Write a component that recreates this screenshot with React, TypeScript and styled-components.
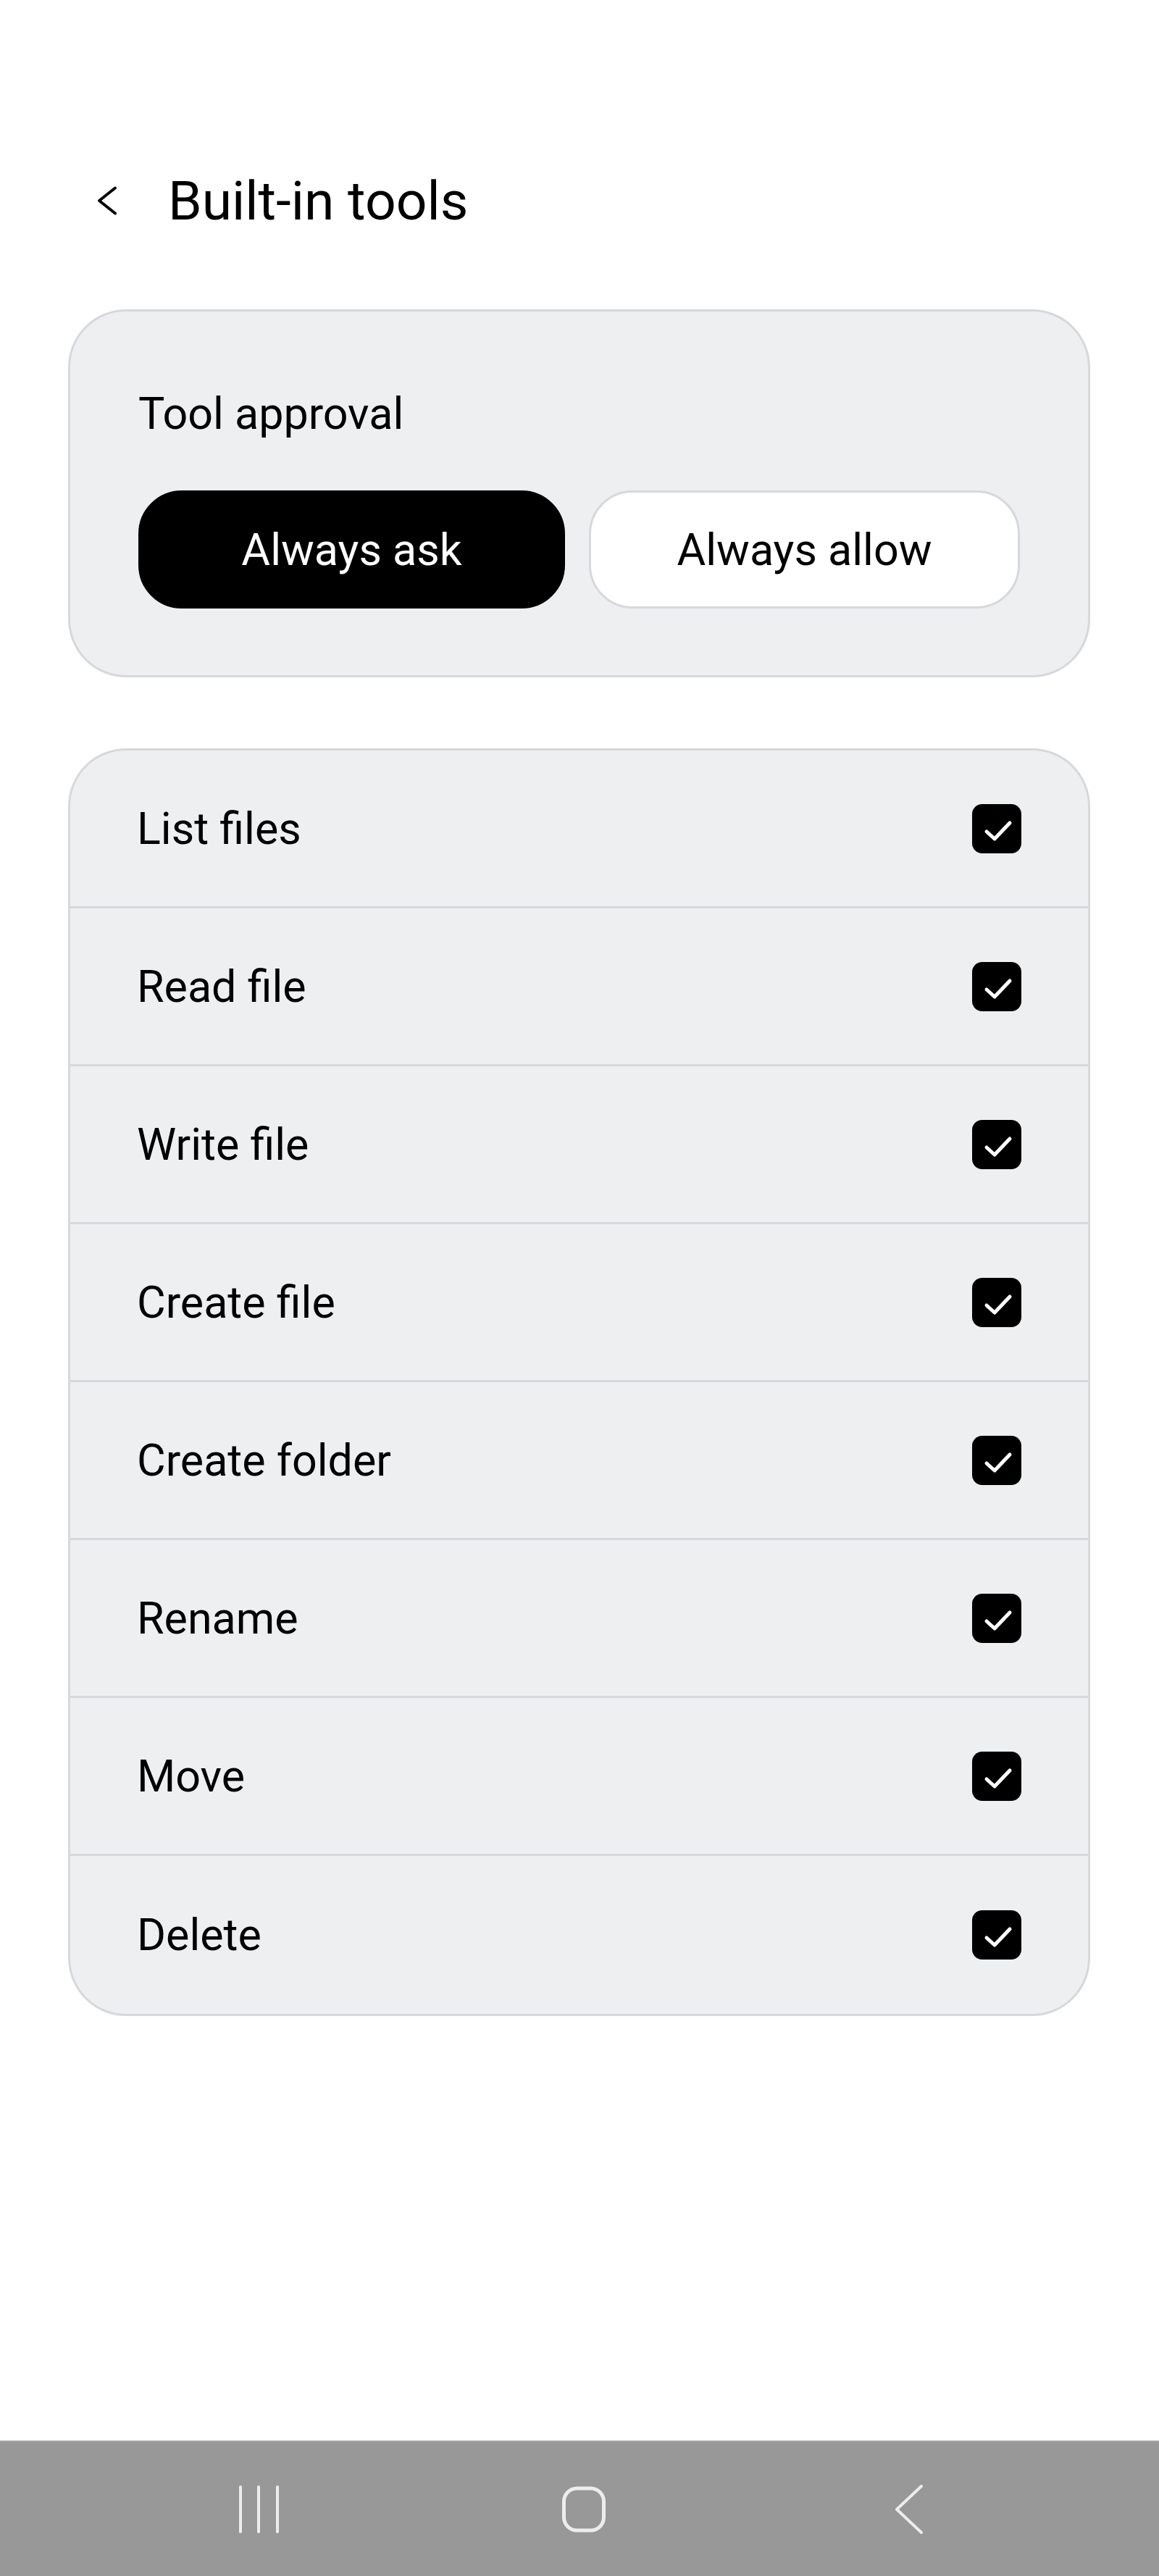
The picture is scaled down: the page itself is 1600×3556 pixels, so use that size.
import React, { useState } from 'react';
import styled, { createGlobalStyle } from 'styled-components';

const GlobalStyle = createGlobalStyle`
  html, body {
    margin: 0;
    padding: 0;
    background: #ffffff;
  }

  body {
    font-family: Roboto, "Noto Sans", "Liberation Sans", sans-serif;
    color: #000000;
  }

  * {
    box-sizing: border-box;
  }
`;

const Screen = styled.div`
  min-height: 100vh;
  display: flex;
  flex-direction: column;
`;

const Content = styled.main`
  padding: 233px 95px 0 94px;
`;

const Header = styled.header`
  display: flex;
  align-items: center;
  height: 88px;
  padding-left: 40px;
  gap: 70px;
`;

const BackButton = styled.button`
  display: flex;
  align-items: center;
  justify-content: center;
  padding: 0;
  border: none;
  background: none;
  cursor: pointer;
`;

const Title = styled.h1`
  margin: 0;
  font-size: 75px;
  font-weight: 400;
  line-height: 88px;
  letter-spacing: 0;
`;

const Card = styled.section<{ $gap?: number }>`
  margin-top: ${p => p.$gap ?? 0}px;
  background: #eeeff1;
  border: 3px solid #d7d8db;
  border-radius: 80px;
  overflow: hidden;
`;

const ApprovalBody = styled.div`
  padding: 105px 94px 92px 94px;
`;

const SectionLabel = styled.div`
  font-size: 61px;
  line-height: 72px;
`;

const Segments = styled.div`
  display: grid;
  grid-template-columns: 589px 1fr;
  gap: 33px;
  margin-top: 70px;
`;

const Segment = styled.button<{ $active: boolean }>`
  height: 163px;
  border-radius: 60px;
  border: 3px solid ${p => (p.$active ? '#000000' : '#d7d8db')};
  background: ${p => (p.$active ? '#000000' : '#ffffff')};
  color: ${p => (p.$active ? '#ffffff' : '#000000')};
  font-family: inherit;
  font-size: 61px;
  font-weight: 400;
  cursor: pointer;
`;

const ToolRow = styled.label`
  display: flex;
  align-items: center;
  justify-content: space-between;
  height: 218px;
  padding: 0 92px 0 92px;
  border-bottom: 3px solid #d7d8db;
  cursor: pointer;

  &:last-child {
    border-bottom: none;
  }
`;

const ToolName = styled.span`
  font-size: 61px;
`;

const CheckBox = styled.span<{ $checked: boolean }>`
  display: flex;
  align-items: center;
  justify-content: center;
  width: 68px;
  height: 68px;
  border-radius: 14px;
  background: ${p => (p.$checked ? '#000000' : 'transparent')};
  border: ${p => (p.$checked ? 'none' : '4px solid #000000')};
`;

const HiddenInput = styled.input`
  display: none;
`;

const NavBar = styled.nav`
  margin-top: auto;
  height: 187px;
  background: #989898;
  border-top: 2px solid #a6a6a6;
  display: grid;
  grid-template-columns: repeat(3, 449px);
  justify-content: center;
  align-items: center;
  padding-left: 12px;
`;

const NavSlot = styled.div`
  display: flex;
  align-items: center;
  justify-content: center;
`;

const tools = [
  'List files',
  'Read file',
  'Write file',
  'Create file',
  'Create folder',
  'Rename',
  'Move',
  'Delete',
];

type Approval = 'ask' | 'allow';

const ChevronLeft = () => (
  <svg width="28" height="44" viewBox="0 0 28 44" fill="none">
    <polyline
      points="25,4.5 3,22 25,39.5"
      stroke="#000"
      strokeWidth="4"
      strokeLinecap="round"
      strokeLinejoin="round"
    />
  </svg>
);

const Tick = () => (
  <svg width="68" height="68" viewBox="0 0 68 68" fill="none">
    <polyline
      points="20,38 31,48 52,26"
      stroke="#fff"
      strokeWidth="5"
      strokeLinecap="round"
      strokeLinejoin="round"
    />
  </svg>
);

const RecentsIcon = () => (
  <svg width="64" height="70" viewBox="0 0 64 70" fill="none" stroke="#ededed" strokeWidth="4" strokeLinecap="round">
    <line x1="7" y1="4" x2="7" y2="66" />
    <line x1="32" y1="4" x2="32" y2="66" />
    <line x1="58" y1="4" x2="58" y2="66" />
  </svg>
);

const HomeIcon = () => (
  <svg width="68" height="70" viewBox="0 0 68 70" fill="none">
    <rect x="6.5" y="6" width="55" height="58" rx="18" stroke="#ededed" strokeWidth="5" />
  </svg>
);

const BackIcon = () => (
  <svg width="44" height="72" viewBox="0 0 44 72" fill="none">
    <polyline
      points="39,4 5,36 39,68"
      stroke="#ededed"
      strokeWidth="4"
      strokeLinecap="round"
      strokeLinejoin="round"
    />
  </svg>
);

export default function App() {
  const [approval, setApproval] = useState<Approval>('ask');
  const [enabled, setEnabled] = useState<Record<string, boolean>>(
    () => Object.fromEntries(tools.map(t => [t, true]))
  );

  const toggle = (name: string) =>
    setEnabled(prev => ({ ...prev, [name]: !prev[name] }));

  return (
    <Screen>
      <GlobalStyle />
      <Content>
        <Header>
          <BackButton aria-label="Back">
            <ChevronLeft />
          </BackButton>
          <Title>Built-in tools</Title>
        </Header>

        <Card $gap={106}>
          <ApprovalBody>
            <SectionLabel>Tool approval</SectionLabel>
            <Segments>
              <Segment $active={approval === 'ask'} onClick={() => setApproval('ask')}>
                Always ask
              </Segment>
              <Segment $active={approval === 'allow'} onClick={() => setApproval('allow')}>
                Always allow
              </Segment>
            </Segments>
          </ApprovalBody>
        </Card>

        <Card $gap={98}>
          {tools.map(name => (
            <ToolRow key={name}>
              <ToolName>{name}</ToolName>
              <HiddenInput
                type="checkbox"
                checked={enabled[name]}
                onChange={() => toggle(name)}
              />
              <CheckBox $checked={enabled[name]}>{enabled[name] && <Tick />}</CheckBox>
            </ToolRow>
          ))}
        </Card>
      </Content>

      <NavBar>
        <NavSlot>
          <RecentsIcon />
        </NavSlot>
        <NavSlot>
          <HomeIcon />
        </NavSlot>
        <NavSlot>
          <BackIcon />
        </NavSlot>
      </NavBar>
    </Screen>
  );
}
